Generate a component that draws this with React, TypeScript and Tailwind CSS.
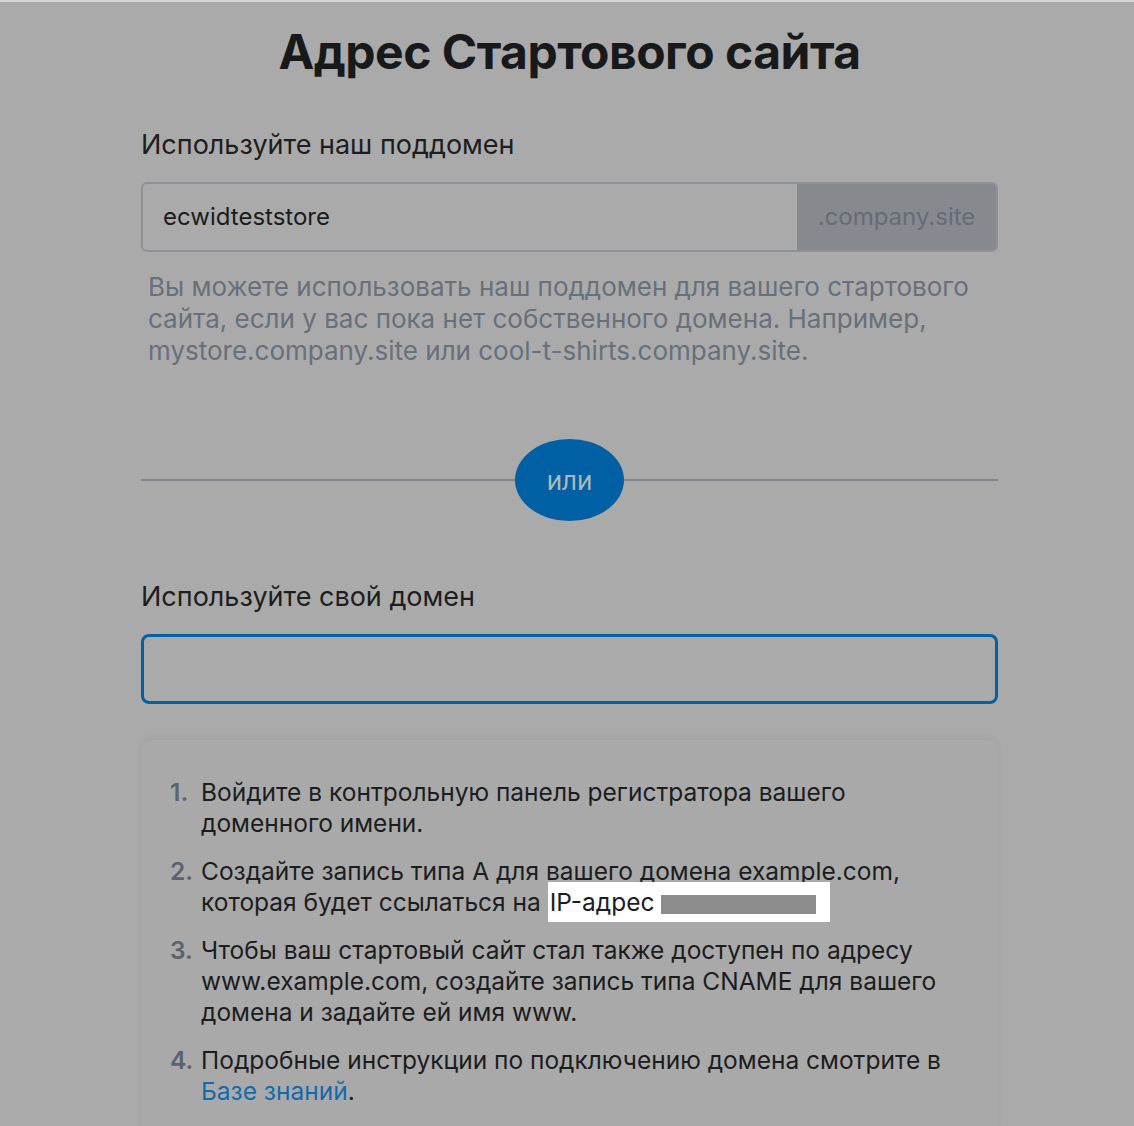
import React from 'react';

const BASE_FONT = "font-['Inter','Noto_Sans',sans-serif]";

const Step: React.FC<{ n: number; children: React.ReactNode }> = ({ n, children }) => (
  <li className="flex">
    <span className="w-[31px] shrink-0 font-semibold text-[#5a646e]">{n}.</span>
    <span>{children}</span>
  </li>
);

const App: React.FC = () => {
  return (
    <div className={`min-h-[1126px] w-full bg-[#aaaaaa] border-t-2 border-[#d4d4d4] ${BASE_FONT}`}>
      <div className="ml-[141px] w-[857px] pt-[22px]">
        <h1 className="text-center text-[48px] leading-[56px] font-bold text-[#18191b] tracking-[-0.5px]">
          Адрес Стартового сайта
        </h1>

        <h2 className="mt-[49px] text-[27px] leading-[32px] text-[#1d1e20]">Используйте наш поддомен</h2>

        <div className="mt-[21px] flex h-[70px] overflow-hidden rounded-[6px] border-2 border-[#8e9297]">
          <div className="flex flex-1 items-center px-5 text-[24px] text-[#1b1c1e]">ecwidteststore</div>
          <div className="flex w-[199px] items-center justify-center bg-[#868a8e] text-[24px] text-[#656c74]">
            .company.site
          </div>
        </div>

        <p className="mt-[19px] pl-[7px] text-[26px] leading-[32px] text-[#67707b]">
          Вы можете использовать наш поддомен для вашего стартового сайта, если у вас пока нет собственного домена. Например, mystore.company.site или cool-t-shirts.company.site.
        </p>

        <div className="mt-[72px] flex h-[82px] items-center">
          <div className="h-[2px] flex-1 bg-[#80868c]" />
          <div className="flex h-[82px] w-[109px] items-center justify-center rounded-[50%] bg-[#0060a3] text-[26px] text-[#b3b6b9]">
            или
          </div>
          <div className="h-[2px] flex-1 bg-[#80868c]" />
        </div>

        <h2 className="mt-[60px] text-[27px] leading-[32px] text-[#1d1e20]">Используйте свой домен</h2>

        <div className="mt-[21px] h-[70px] rounded-[8px] border-[3px] border-[#0061a6]" />

        <div className="mt-[36px] rounded-t-[10px] bg-[#a9a9a9] shadow-[0_-2px_6px_rgba(0,0,0,0.06)] pl-[29px] pr-[45px] pt-[37px] pb-6">
          <ol className="flex flex-col gap-[17px] text-[24.5px] leading-[31px] text-[#1c1d1f]">
            <Step n={1}>Войдите в контрольную панель регистратора вашего доменного имени.</Step>
            <Step n={2}>
              Создайте запись типа A для вашего домена example.com, которая будет ссылаться на{' '}
              <span className="bg-white py-[5px] pl-[2px] pr-[14px]">
                IP-адрес <span className="inline-block h-[19px] w-[155px] translate-y-[3px] bg-[#8c8c8c]" />
              </span>
            </Step>
            <Step n={3}>
              Чтобы ваш стартовый сайт стал также доступен по адресу www.example.com, создайте запись типа CNAME для вашего домена и задайте ей имя www.
            </Step>
            <Step n={4}>
              Подробные инструкции по подключению домена смотрите в{' '}
              <a className="text-[#1469ad]" href="#">
                Базе знаний
              </a>
              .
            </Step>
          </ol>
        </div>
      </div>
    </div>
  );
};

export default App;
